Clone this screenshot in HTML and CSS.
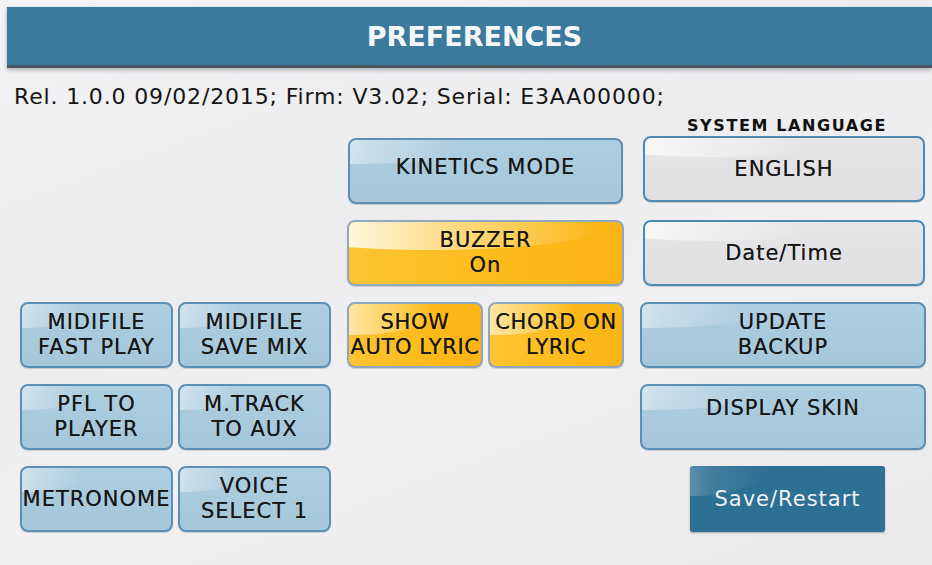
FILE: index.html
```html
<!DOCTYPE html>
<html>
<head>
<meta charset="utf-8">
<link rel="stylesheet" href="styles.css">
</head>
<body>
<div class="screen">
  <header class="header"><h1 class="title">PREFERENCES</h1></header>
  <div class="info">Rel. 1.0.0 09/02/2015; Firm: V3.02; Serial: E3AA00000;</div>
  <div class="grid">
    <div class="label c3 r0">SYSTEM LANGUAGE</div>

    <div class="btn blue c2 r1 top-k">KINETICS MODE</div>
    <div class="btn orange c2 r2"><span>BUZZER<br>On</span></div>
    <div class="pair c2 r3">
      <div class="btn orange narrow"><span>SHOW<br>AUTO LYRIC</span></div>
      <div class="btn orange narrow"><span>CHORD ON<br>LYRIC</span></div>
    </div>

    <div class="btn gray c3 r1 lang">ENGLISH</div>
    <div class="btn gray c3 r2 date">Date/Time</div>
    <div class="btn blue c3 r3"><span>UPDATE<br>BACKUP</span></div>
    <div class="btn blue c3 r4 top-d">DISPLAY SKIN</div>
    <div class="save-wrap c3 r5"><div class="btn dark">Save/Restart</div></div>

    <div class="pair c1 r3">
      <div class="btn blue"><span>MIDIFILE<br>FAST PLAY</span></div>
      <div class="btn blue"><span>MIDIFILE<br>SAVE MIX</span></div>
    </div>
    <div class="pair c1 r4">
      <div class="btn blue"><span>PFL TO<br>PLAYER</span></div>
      <div class="btn blue"><span>M.TRACK<br>TO AUX</span></div>
    </div>
    <div class="pair c1 r5">
      <div class="btn blue"><span>METRONOME</span></div>
      <div class="btn blue"><span>VOICE<br>SELECT 1</span></div>
    </div>
  </div>
</div>
</body>
</html>
```
FILE: styles.css
```css
html, body {
  margin: 0;
  padding: 0;
  background: #ffffff;
}
.screen {
  width: 932px;
  height: 565px;
  padding: 7px 0 0 7px;
  box-sizing: border-box;
  background: linear-gradient(160deg, #f3f2f4 0%, #ecebee 40%, #f1f0f2 60%, #e9e8eb 100%);
  font-family: "DejaVu Sans", "Liberation Sans", sans-serif;
  color: #1b1b1b;
  overflow: hidden;
}
.header {
  height: 58px;
  background: #3b7a9d;
  border-bottom: 3px solid #4b565e;
  box-shadow: 0 2px 4px rgba(40, 50, 60, 0.35);
  display: flex;
  align-items: center;
  justify-content: center;
}
.title {
  margin: 0;
  font-size: 27px;
  font-weight: bold;
  color: #f4f7f9;
  letter-spacing: 0;
  padding-left: 10px;
}
.info {
  margin: 16px 0 0 7px;
  font-size: 22px;
  line-height: 26px;
  height: 26px;
  letter-spacing: 0.85px;
  white-space: nowrap;
  color: #151515;
}
.grid {
  display: grid;
  grid-template-columns: 311px 277px 286px;
  grid-template-rows: 18px 66px 66px 66px 66px 66px;
  column-gap: 16px;
  row-gap: 16px;
  margin: 0 0 0 13px;
  position: relative;
  top: -6px;
}
.c1 { grid-column: 1; }
.c2 { grid-column: 2; }
.c3 { grid-column: 3; }
.r0 { grid-row: 1; }
.r1 { grid-row: 2; }
.r2 { grid-row: 3; }
.r3 { grid-row: 4; }
.r4 { grid-row: 5; }
.r5 { grid-row: 6; }

.label {
  font-size: 16px;
  font-weight: bold;
  letter-spacing: 1.6px;
  text-align: center;
  line-height: 18px;
  padding-left: 8px;
  align-self: end;
  margin-bottom: -13px;
  color: #111;
}
.pair {
  display: flex;
  gap: 5px;
}
.pair .btn { flex: 1; }

.btn {
  position: relative;
  overflow: hidden;
  box-sizing: border-box;
  border-radius: 8px;
  border: 2px solid #5b8fb4;
  display: flex;
  align-items: center;
  justify-content: center;
  text-align: center;
  font-size: 21px;
  line-height: 25px;
  letter-spacing: 1px;
  white-space: nowrap;
  color: #161616;
  text-shadow: 0 0 0.6px rgba(0,0,0,0.6);
  box-shadow: 0 1px 1px rgba(0,0,0,0.15);
  z-index: 0;
}
.btn::before {
  content: "";
  position: absolute;
  left: -45%;
  top: -38%;
  width: 95%;
  height: 76%;
  border-radius: 50%;
  z-index: -1;
}
.blue {
  background: linear-gradient(180deg, #adcde0 0%, #a6c6da 100%);
}
.blue::before {
  background: linear-gradient(100deg, rgba(255,255,255,0.9) 20%, rgba(255,255,255,0.35) 55%, rgba(255,255,255,0) 90%);
}
.orange {
  border-color: #8ea8bd;
  background: linear-gradient(90deg, #fdc432 0%, #fcbb1a 60%, #fbb414 100%);
}
.orange::before {
  left: -40%;
  top: -50%;
  width: 140%;
  height: 95%;
  background: linear-gradient(90deg, rgba(255,255,255,0.95) 20%, rgba(255,240,200,0.6) 55%, rgba(255,255,255,0) 95%);
}
.narrow { letter-spacing: 0.6px; }
.narrow::before {
  left: -60%;
  top: -45%;
  width: 130%;
  height: 95%;
}
.gray {
  background: linear-gradient(180deg, #e6e6e8 0%, #dfdfe2 100%);
  border-color: #4f88b0;
}
.gray::before {
  left: -30%;
  top: -40%;
  width: 110%;
  height: 70%;
  background: linear-gradient(100deg, rgba(255,255,255,0.8) 20%, rgba(255,255,255,0) 80%);
}
.top-k {
  align-items: flex-start;
  padding-top: 15px;
  margin: 0 1px;
}
.top-d {
  align-items: flex-start;
  padding-top: 10px;
}
.lang, .date { margin: 0 1px 0 3px; }
.lang { margin-top: -2px; margin-bottom: 2px; padding-top: 1px; }
.date { margin-top: 0; }
.save-wrap {
  display: flex;
  justify-content: center;
  padding-right: 41px;
  padding-left: 50px;
}
.dark {
  flex: 1;
  border: none;
  border-radius: 3px;
  background: #2e6f94;
  color: #eef3f6;
  text-shadow: none;
  box-shadow: 0 1px 2px rgba(0,0,0,0.3);
}
.dark::before {
  left: -35%;
  top: -45%;
  width: 75%;
  height: 90%;
  background: linear-gradient(90deg, rgba(255,255,255,0.55) 10%, rgba(255,255,255,0.1) 60%, rgba(255,255,255,0) 100%);
}
```
